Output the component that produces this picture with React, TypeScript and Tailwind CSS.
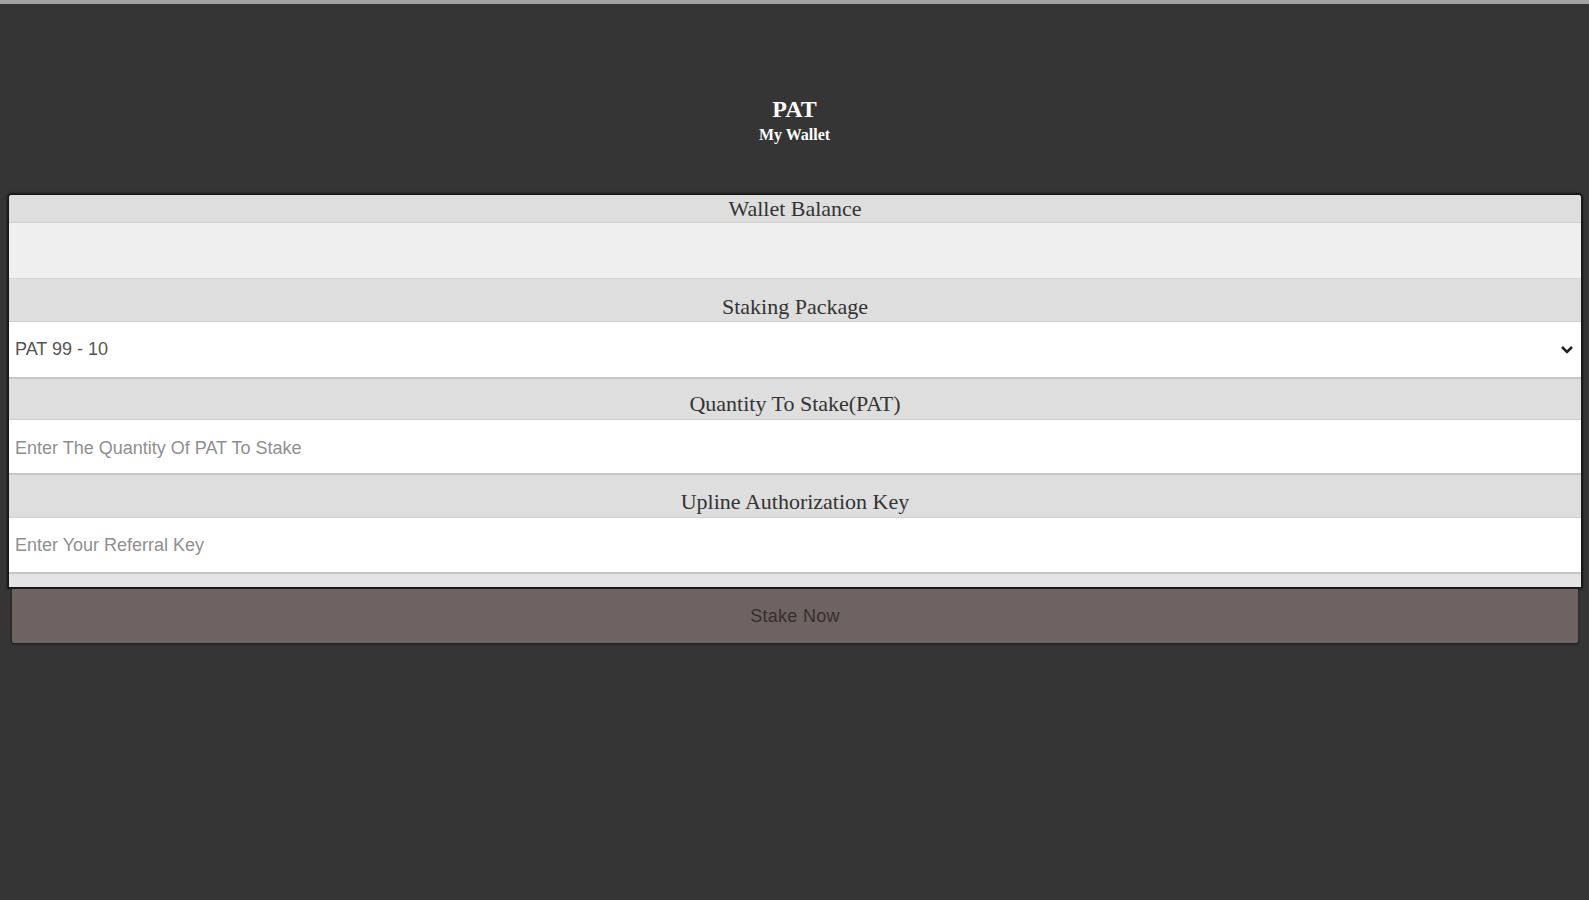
import React, { useState } from 'react';

const serif = "font-['Liberation_Serif','Times_New_Roman',serif]";
const sans = "font-['Liberation_Sans',Arial,sans-serif]";

const FieldHeader = ({ label, className = '' }: { label: string; className?: string }) => (
  <div className={`bg-[#dedede] border-b border-[#cfcfcf] text-center text-[22px] text-[#333] leading-[25px] ${serif} ${className}`}>
    {label}
  </div>
);

export default function App() {
  const [pkg, setPkg] = useState('99');
  const [qty, setQty] = useState('');
  const [refKey, setRefKey] = useState('');

  return (
    <div className="min-h-[900px] w-full bg-[#353535]">
      <div className="h-[4px] bg-[#a3a3a3]" />

      {/* Title */}
      <div className={`pt-[91px] text-center text-white font-bold ${serif}`}>
        <h1 className="text-[24px] leading-[28px]">PAT</h1>
        <p className="text-[16px] leading-[18px] mt-[3px]">My Wallet</p>
      </div>

      {/* Stake form */}
      <div className="mt-[51px] ml-[9px] mr-[8px] bg-[#dedede] rounded-t-[3px] shadow-[0_0_2px_2px_#151515] overflow-hidden">
        <FieldHeader label="Wallet Balance" className="h-[28px] pt-[1px]" />
        <div className="h-[56px] bg-[#efefef] border-b border-[#d6d6d6]" />

        <FieldHeader label="Staking Package" className="h-[43px] pt-[15px]" />
        <div className="relative h-[57px] bg-white border-b-2 border-[#c6c6c6]">
          <select
            value={pkg}
            onChange={e => setPkg(e.target.value)}
            className={`appearance-none w-full h-full bg-transparent pl-[6px] pr-8 text-[18px] text-[#555] outline-none ${sans}`}
          >
            <option value="99">PAT 99 - 10</option>
            <option value="199">PAT 199 - 20</option>
            <option value="499">PAT 499 - 50</option>
          </select>
          <svg className="absolute right-[7px] top-[23px] w-[14px] h-[9px] pointer-events-none" viewBox="0 0 14 9">
            <path d="M2 2 L7 7 L12 2" fill="none" stroke="#222" strokeWidth="2.6" />
          </svg>
        </div>

        <FieldHeader label="Quantity To Stake(PAT)" className="h-[41px] pt-[12px]" />
        <div className="h-[55px] bg-white border-b-2 border-[#c6c6c6]">
          <input
            value={qty}
            onChange={e => setQty(e.target.value)}
            placeholder="Enter The Quantity Of PAT To Stake"
            className={`w-full h-full px-[6px] pt-[3px] text-[18px] text-[#333] placeholder:text-[#8f8f8f] bg-white outline-none ${sans}`}
          />
        </div>

        <FieldHeader label="Upline Authorization Key" className="h-[43px] pt-[14px]" />
        <div className="h-[56px] bg-white border-b-2 border-[#c6c6c6]">
          <input
            value={refKey}
            onChange={e => setRefKey(e.target.value)}
            placeholder="Enter Your Referral Key"
            className={`w-full h-full px-[6px] pt-[1px] text-[18px] text-[#333] placeholder:text-[#8f8f8f] bg-white outline-none ${sans}`}
          />
        </div>

        <div className="h-[13px] bg-[#e4e4e4]" />
      </div>

      <button
        className={`block mt-[2px] ml-[12px] mr-[11px] w-[calc(100%-23px)] h-[54px] bg-[#6f6262] rounded-b-[2px] shadow-[0_1px_3px_#1a1a1a] text-[18px] tracking-[0.3px] text-[#362f2f] ${sans}`}
      >
        Stake Now
      </button>
    </div>
  );
}
